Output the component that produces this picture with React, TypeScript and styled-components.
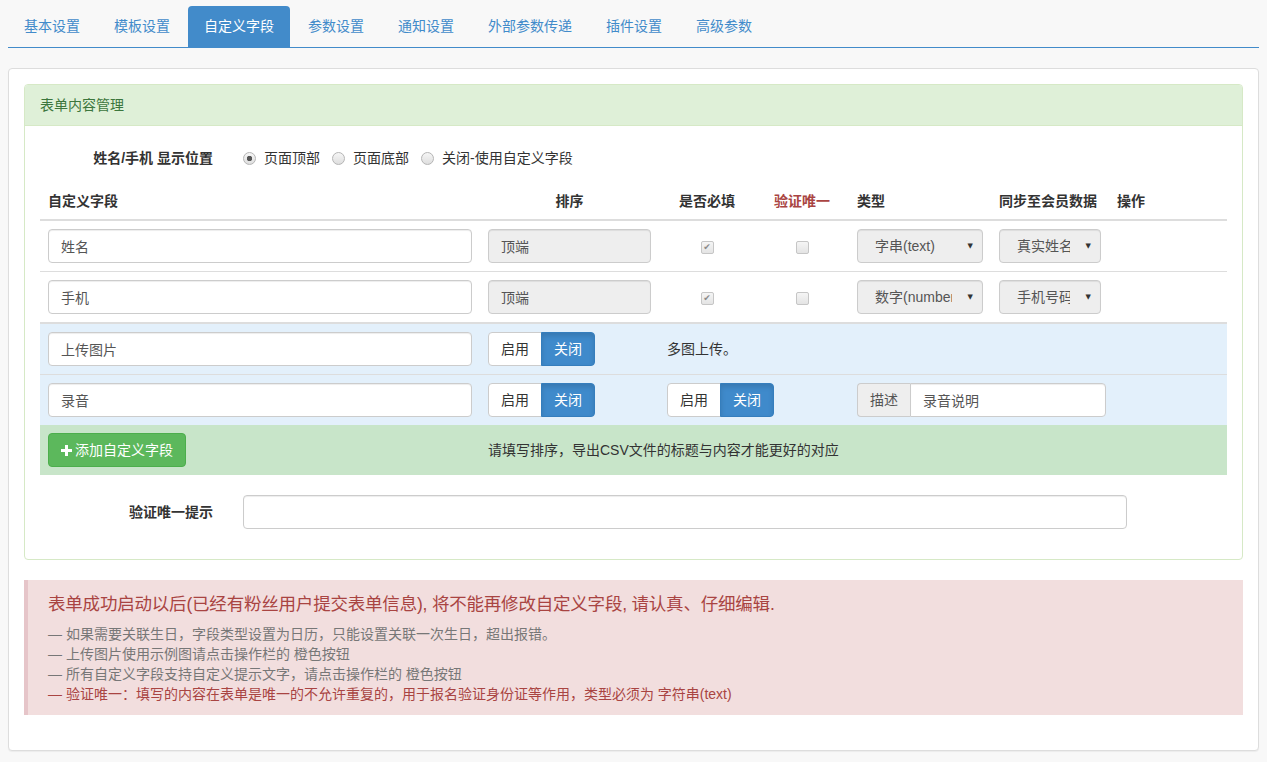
import React from "react";
import styled, { createGlobalStyle } from "styled-components";

const GlobalStyle = createGlobalStyle`
  html, body {
    margin: 0;
    padding: 0;
    background: #f8f8f8;
  }
  body {
    font-family: "Liberation Sans", "Noto Sans CJK SC", sans-serif;
    font-size: 14px;
    line-height: 20px;
    color: #333;
  }
  * {
    box-sizing: border-box;
  }
`;

const tabs = ["基本设置", "模板设置", "自定义字段", "参数设置", "通知设置", "外部参数传递", "插件设置", "高级参数"];

const fixedFields = [
  { name: "姓名", type: "字串(text)", sync: "真实姓名" },
  { name: "手机", type: "数字(number)", sync: "手机号码" },
];

const notes = [
  "— 如果需要关联生日，字段类型设置为日历，只能设置关联一次生日，超出报错。",
  "— 上传图片使用示例图请点击操作栏的 橙色按钮",
  "— 所有自定义字段支持自定义提示文字，请点击操作栏的 橙色按钮",
];

const App = () => {
  return (
    <Page>
      <GlobalStyle />
      <TabBar>
        {tabs.map((t) => (
          <Tab key={t} $active={t === "自定义字段"}>
            {t}
          </Tab>
        ))}
      </TabBar>

      <Box>
        <Panel>
          <PanelHeading>表单内容管理</PanelHeading>
          <PanelBody>
            <FormRow>
              <FormLabel>姓名/手机 显示位置</FormLabel>
              <Radios>
                <RadioLabel>
                  <Radio name="pos" defaultChecked />
                  页面顶部
                </RadioLabel>
                <RadioLabel>
                  <Radio name="pos" />
                  页面底部
                </RadioLabel>
                <RadioLabel>
                  <Radio name="pos" />
                  关闭-使用自定义字段
                </RadioLabel>
              </Radios>
            </FormRow>

            <Table>
              <colgroup>
                <col style={{ width: 440 }} />
                <col style={{ width: 179 }} />
                <col style={{ width: 96 }} />
                <col style={{ width: 94 }} />
                <col style={{ width: 142 }} />
                <col style={{ width: 118 }} />
                <col style={{ width: 118 }} />
              </colgroup>
              <thead>
                <tr>
                  <Th>自定义字段</Th>
                  <Th $center>排序</Th>
                  <Th $center>是否必填</Th>
                  <Th $center $danger>
                    验证唯一
                  </Th>
                  <Th>类型</Th>
                  <Th>同步至会员数据</Th>
                  <Th>操作</Th>
                </tr>
              </thead>
              <tbody>
                {fixedFields.map((f) => (
                  <tr key={f.name}>
                    <Td>
                      <TextInput defaultValue={f.name} />
                    </Td>
                    <Td>
                      <TextInput defaultValue="顶端" readOnly />
                    </Td>
                    <Td $center>
                      <Check defaultChecked disabled />
                    </Td>
                    <Td $center>
                      <Check disabled />
                    </Td>
                    <Td>
                      <SelectWrap>
                        <Select disabled defaultValue={f.type}>
                          <option>{f.type}</option>
                        </Select>
                      </SelectWrap>
                    </Td>
                    <Td>
                      <SelectWrap>
                        <Select disabled defaultValue={f.sync}>
                          <option>{f.sync}</option>
                        </Select>
                      </SelectWrap>
                    </Td>
                    <Td />
                  </tr>
                ))}
              </tbody>
              <InfoBody>
                <tr>
                  <Td>
                    <TextInput defaultValue="上传图片" />
                  </Td>
                  <Td>
                    <Toggle />
                  </Td>
                  <Td colSpan={5}>多图上传。</Td>
                </tr>
                <tr>
                  <Td>
                    <TextInput defaultValue="录音" />
                  </Td>
                  <Td>
                    <Toggle />
                  </Td>
                  <Td colSpan={2}>
                    <Toggle />
                  </Td>
                  <Td colSpan={3}>
                    <InputGroup>
                      <Addon>描述</Addon>
                      <GroupInput defaultValue="录音说明" />
                    </InputGroup>
                  </Td>
                </tr>
              </InfoBody>
              <tfoot>
                <SuccessRow>
                  <Td $flat>
                    <AddButton>
                      <svg width="11" height="11" viewBox="0 0 11 11">
                        <path d="M4 0h3v4h4v3H7v4H4V7H0V4h4z" fill="#fff" />
                      </svg>
                      添加自定义字段
                    </AddButton>
                  </Td>
                  <Td $flat colSpan={6}>
                    请填写排序，导出CSV文件的标题与内容才能更好的对应
                  </Td>
                </SuccessRow>
              </tfoot>
            </Table>

            <FormRow $spaced>
              <FormLabel>验证唯一提示</FormLabel>
              <WideInput />
            </FormRow>
          </PanelBody>
        </Panel>

        <Alert>
          <AlertTitle>
            表单成功启动以后(已经有粉丝用户提交表单信息), 将不能再修改自定义字段, 请认真、仔细编辑.
          </AlertTitle>
          {notes.map((n) => (
            <Note key={n}>{n}</Note>
          ))}
          <Note $danger>— 验证唯一：填写的内容在表单是唯一的不允许重复的，用于报名验证身份证等作用，类型必须为 字符串(text)</Note>
        </Alert>
      </Box>
    </Page>
  );
};

const Toggle = () => (
  <BtnGroup>
    <ToggleBtn>启用</ToggleBtn>
    <ToggleBtn $active>关闭</ToggleBtn>
  </BtnGroup>
);

export default App;

const Page = styled.div`
  padding: 6px 8px 10px;
  width: 1267px;
`;

const TabBar = styled.ul`
  display: flex;
  list-style: none;
  margin: 0;
  padding: 0;
  border-bottom: 1px solid #428bca;
`;

const Tab = styled.li<{ $active?: boolean }>`
  margin-right: 2px;
  padding: 10px 16px 11px;
  border-radius: 4px 4px 0 0;
  color: ${(p) => (p.$active ? "#fff" : "#428bca")};
  background: ${(p) => (p.$active ? "#428bca" : "transparent")};
  cursor: pointer;
`;

const Box = styled.div`
  margin-top: 20px;
  padding: 15px;
  background: #fff;
  border: 1px solid #ddd;
  border-radius: 4px;
  box-shadow: 0 1px 1px rgba(0, 0, 0, 0.05);
`;

const Panel = styled.div`
  margin-bottom: 20px;
  border: 1px solid #d6e9c6;
  border-radius: 4px;
  background: #fff;
`;

const PanelHeading = styled.div`
  padding: 10px 15px;
  background: #dff0d8;
  color: #3c763d;
  border-bottom: 1px solid #d6e9c6;
  border-radius: 3px 3px 0 0;
`;

const PanelBody = styled.div`
  padding: 15px;
`;

const FormRow = styled.div<{ $spaced?: boolean }>`
  display: grid;
  grid-template-columns: 173px 1fr;
  column-gap: 30px;
  align-items: center;
  min-height: 34px;
  margin: ${(p) => (p.$spaced ? "20px 0 15px" : "0 0 8px")};
`;

const FormLabel = styled.label`
  text-align: right;
  font-weight: 700;
`;

const Radios = styled.div`
  display: flex;
  align-items: center;
`;

const RadioLabel = styled.label`
  display: inline-flex;
  align-items: center;
  margin-right: 12px;
  color: #333;
`;

const Radio = styled.input.attrs({ type: "radio" })`
  appearance: none;
  width: 13px;
  height: 13px;
  margin: 0 8px 0 0;
  border: 1px solid #b5b5b5;
  border-radius: 50%;
  background: linear-gradient(#f6f6f6, #dedede);
  &:checked {
    background: radial-gradient(circle, #555 0 2.5px, transparent 3px), linear-gradient(#f6f6f6, #dedede);
  }
`;

const Table = styled.table`
  width: 100%;
  border-collapse: collapse;
  table-layout: fixed;
`;

const Th = styled.th<{ $center?: boolean; $danger?: boolean }>`
  padding: 8px;
  text-align: ${(p) => (p.$center ? "center" : "left")};
  color: ${(p) => (p.$danger ? "#a94442" : "#333")};
  font-weight: 700;
  border-bottom: 2px solid #ddd;
  vertical-align: bottom;
`;

const Td = styled.td<{ $center?: boolean; $flat?: boolean }>`
  padding: 8px;
  text-align: ${(p) => (p.$center ? "center" : "left")};
  border-top: ${(p) => (p.$flat ? "none" : "1px solid #ddd")};
  vertical-align: middle;
`;

const InfoBody = styled.tbody`
  background: #e3f0fb;
  border-top: 2px solid #ddd;
`;

const SuccessRow = styled.tr`
  background: #c8e5c9;
`;

const TextInput = styled.input`
  display: block;
  width: 100%;
  height: 34px;
  padding: 6px 12px;
  font: inherit;
  color: #555;
  background: #fff;
  border: 1px solid #ccc;
  border-radius: 4px;
  box-shadow: inset 0 1px 1px rgba(0, 0, 0, 0.075);
  &[readonly] {
    background: #eee;
  }
`;

const WideInput = styled(TextInput)`
  width: 884px;
`;

const Check = styled.input.attrs({ type: "checkbox" })`
  appearance: none;
  position: relative;
  width: 13px;
  height: 13px;
  margin: 0;
  vertical-align: middle;
  border: 1px solid #c6c6c6;
  border-radius: 2px;
  background: linear-gradient(#f5f5f5, #e4e4e4);
  &:checked::after {
    content: "✔";
    position: absolute;
    inset: 0;
    font-family: "DejaVu Sans", sans-serif;
    font-size: 9px;
    line-height: 11px;
    text-align: center;
    color: #8a8a8a;
  }
`;

const SelectWrap = styled.div`
  position: relative;
  &::after {
    content: "▼";
    position: absolute;
    right: 10px;
    top: 50%;
    transform: translateY(-50%);
    font-family: "DejaVu Sans", sans-serif;
    font-size: 7px;
    line-height: 10px;
    color: #333;
    pointer-events: none;
  }
`;

const Select = styled.select`
  appearance: none;
  display: block;
  width: 100%;
  height: 34px;
  padding: 6px 30px 6px 17px;
  font: inherit;
  color: #555;
  opacity: 1;
  background: #eee;
  border: 1px solid #ccc;
  border-radius: 4px;
  box-shadow: inset 0 1px 1px rgba(0, 0, 0, 0.075);
`;

const BtnGroup = styled.div`
  display: inline-flex;
`;

const ToggleBtn = styled.button<{ $active?: boolean }>`
  height: 34px;
  padding: 6px 12px;
  font: inherit;
  line-height: 20px;
  color: ${(p) => (p.$active ? "#fff" : "#333")};
  background: ${(p) => (p.$active ? "#3f8acb" : "#fff")};
  border: 1px solid ${(p) => (p.$active ? "#357ebd" : "#ccc")};
  box-shadow: ${(p) => (p.$active ? "inset 0 3px 5px rgba(0,0,0,.125)" : "none")};
  cursor: pointer;
  &:first-child {
    border-radius: 4px 0 0 4px;
  }
  &:last-child {
    margin-left: -1px;
    border-radius: 0 4px 4px 0;
  }
`;

const InputGroup = styled.div`
  display: flex;
  width: 249px;
`;

const Addon = styled.span`
  padding: 6px 12px;
  color: #555;
  background: #eee;
  border: 1px solid #ccc;
  border-right: 0;
  border-radius: 4px 0 0 4px;
`;

const GroupInput = styled(TextInput)`
  flex: 1;
  border-radius: 0 4px 4px 0;
`;

const AddButton = styled.button`
  display: inline-flex;
  align-items: center;
  gap: 3px;
  height: 34px;
  padding: 6px 12px;
  font: inherit;
  color: #fff;
  background: #5cb85c;
  border: 1px solid #4cae4c;
  border-radius: 4px;
  cursor: pointer;
`;

const Alert = styled.div`
  margin-bottom: 20px;
  padding: 11px 20px;
  background: #f2dede;
  border-left: 4px solid #e6c5c9;
  color: #777;
`;

const AlertTitle = styled.div`
  margin-bottom: 7px;
  font-size: 17.5px;
  line-height: 26px;
  letter-spacing: -0.2px;
  color: #a94442;
`;

const Note = styled.div<{ $danger?: boolean }>`
  color: ${(p) => (p.$danger ? "#a94442" : "#777")};
`;
